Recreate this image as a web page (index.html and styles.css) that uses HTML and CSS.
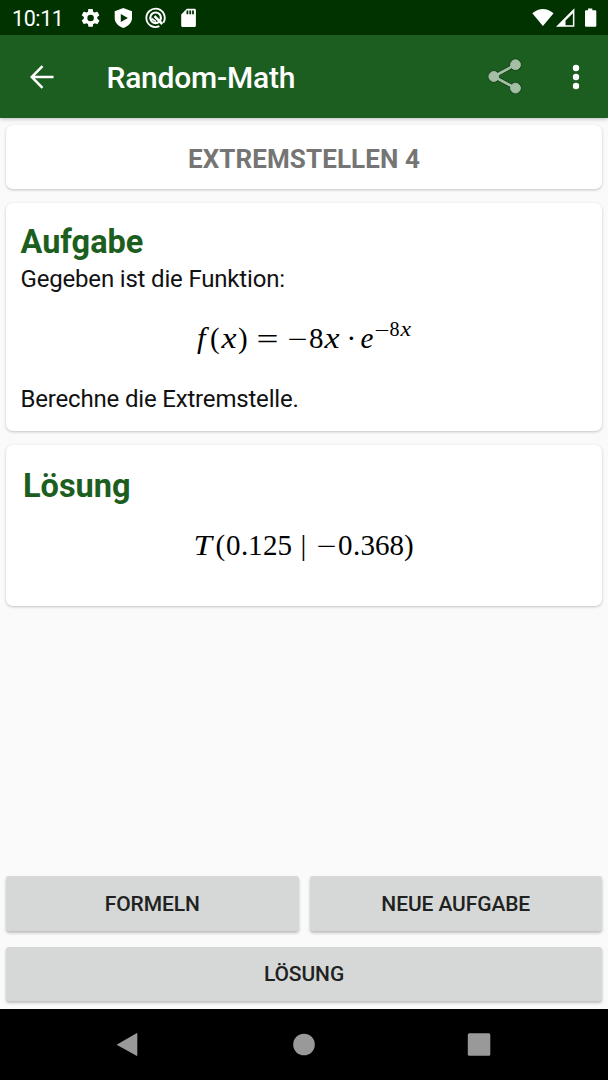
FILE: index.html
```html
<!DOCTYPE html>
<html lang="de">
<head>
    <meta charset="UTF-8">
    <meta name="viewport" content="width=device-width, initial-scale=1.0">
    <title>Random-Math</title>
    <link rel="stylesheet" href="styles.css">
</head>
<body>
    <div class="status-bar">
        <span class="clock">10:11</span>
        <svg class="status-icons" width="120" height="24" viewBox="0 0 120 24" fill="#fff">
            <!-- settings -->
            <g transform="translate(-.2 1.1) scale(.9)">
                <path fill-rule="evenodd" d="M19.400 13c0-.3.1-.6.1-1s0-.7-.1-1l2.100-1.600c.2-.2.3-.5.1-.7l-2-3.400c-.1-.2-.4-.3-.6-.2l-2.500 1c-.5-.4-1.100-.7-1.700-1l-.4-2.600c0-.3-.2-.4-.5-.4h-4c-.2 0-.4.200-.5.400L9.100 5.100c-.6.200-1.200.600-1.700 1l-2.500-1c-.2-.1-.5 0-.6.200l-2 3.400c-.1.200-.1.500.1.700l2.100 1.600c0 .3-.1.600-.1 1s0 .7.1 1l-2.100 1.600c-.2.200-.2.500-.1.700l2 3.400c.1.200.4.300.6.200l2.500-1c.5.400 1.100.800 1.700 1l.4 2.600c0 .3.200.400.500.400h4c.3 0 .5-.2.5-.4l.4-2.600c.6-.3 1.200-.6 1.700-1l2.500 1c.2.1.5 0 .6-.2l2-3.400c.1-.2.1-.5-.1-.7zM12 15.600a3.600 3.600 0 1 1 0-7.200 3.600 3.600 0 0 1 0 7.200z"/>
            </g>
            <!-- play protect -->
            <path fill-rule="evenodd" d="M43.300 2L52 5.300v6.700c0 4.700-3.500 7.900-8.700 10-5.200-2.100-8.600-5.300-8.600-10V5.300zM40.800 7.900v8l7.100-4z"/>
            <!-- circled q -->
            <g fill="none" stroke="#fff">
                <path stroke-width="1.9" d="M79.400 20.200A9.200 9.200 0 1 1 83.300 16.800"/>
                <circle cx="75.600" cy="11.800" r="5.300" stroke-width="2.200"/>
                <path stroke-width="2.600" d="M74.500 10.200l7.800 7.800"/>
                <path stroke-width="1.600" d="M71.500 12.500l4.500 3.200"/>
            </g>
            <!-- sd card -->
            <path fill-rule="evenodd" d="M114.500 2.700h-7.700L101.200 8.500v11c0 .9.600 1.500 1.500 1.500h11.700c.9 0 1.500-.6 1.500-1.500V4c0-.7-.6-1.300-1.400-1.300zM106.500 4.500v3.800h1.800V4.500zM109.300 4.500v3.800h1.800V4.500zM112.100 4.500v3.800h1.800V4.500z"/>
        </svg>
        <svg class="system-icons" width="68" height="24" viewBox="0 0 68 24" fill="#fff">
            <path d="M.3 7.300Q10.900-1.500 21.600 7.300L10.900 20z"/>
            <path fill-rule="evenodd" d="M24 20.800L42.400 2.300v18.500zM33.500 19.300h7.400V7.200l-7.400 7.400z"/>
            <path d="M56 2.400h4.300v1.800h2.700c.8 0 1.300.5 1.300 1.300v14c0 .8-.5 1.300-1.300 1.300h-8.700c-.8 0-1.300-.5-1.300-1.300v-14c0-.8.500-1.300 1.300-1.300H56z"/>
        </svg>
    </div>

    <header class="app-bar">
        <svg class="back" width="24" height="24" viewBox="0 0 24 24" fill="none" stroke="#fff" stroke-width="2.500">
            <path d="M23.500 12H2M12.500 1.200L1.700 12l10.800 10.800"/>
        </svg>
        <h1>Random-Math</h1>
        <svg class="share" width="36" height="38" viewBox="0 0 36 38">
            <g stroke="#174719" fill="#174719">
                <path d="M6.800 19.500L28.500 7.700M6.800 19.500l21.700 11.600" stroke-width="4.500"/>
                <circle cx="6.800" cy="19.500" r="5.700"/>
                <circle cx="28.500" cy="7.700" r="5.700"/>
                <circle cx="28.500" cy="31.100" r="5.700"/>
            </g>
            <g stroke="#a5bea6" fill="#a5bea6">
                <path d="M6.800 19.500L28.500 7.700M6.800 19.500l21.700 11.600" stroke-width="2.600"/>
                <circle cx="6.800" cy="19.500" r="4.900"/>
                <circle cx="28.500" cy="7.700" r="4.900"/>
                <circle cx="28.500" cy="31.100" r="4.900"/>
            </g>
        </svg>
        <svg class="more" width="8" height="26" viewBox="0 0 8 26" fill="#fff">
            <circle cx="4" cy="4" r="3.200"/>
            <circle cx="4" cy="13" r="3.200"/>
            <circle cx="4" cy="22" r="3.200"/>
        </svg>
    </header>

    <main class="content">
        <div class="card title-card">EXTREMSTELLEN 4</div>

        <section class="card task-card">
            <h2>Aufgabe</h2>
            <p>Gegeben ist die Funktion:</p>
            <svg class="formula" width="224" height="50" viewBox="0 0 224 50">
                <text class="var" y="34" x="5" textLength="8.500" lengthAdjust="spacingAndGlyphs">f</text>
                <text y="34"><tspan x="18">(</tspan><tspan x="46">)</tspan></text>
                <text class="var" y="34" x="29.500" textLength="15" lengthAdjust="spacingAndGlyphs">x</text>
                <text y="35" x="64.500" textLength="22" lengthAdjust="spacingAndGlyphs">=</text>
                <text y="35" x="95.500" textLength="20" lengthAdjust="spacingAndGlyphs">−</text>
                <text y="34" x="117">8</text>
                <text class="var" y="34" x="132.500" textLength="15" lengthAdjust="spacingAndGlyphs">x</text>
                <text y="34" x="154.500">·</text>
                <text class="var" y="34" x="168.500">e</text>
                <text class="sup" y="23" x="182.500" textLength="15" lengthAdjust="spacingAndGlyphs">−</text>
                <text class="sup" y="22" x="197.500">8</text>
                <text class="sup var" y="22" x="208.500" textLength="10.500" lengthAdjust="spacingAndGlyphs">x</text>
            </svg>
            <p>Berechne die Extremstelle.</p>
        </section>

        <section class="card solution-card">
            <h2>Lösung</h2>
            <svg class="formula" width="224" height="50" viewBox="0 0 224 50">
                <text class="var" y="34" x="1.500" textLength="18.500" lengthAdjust="spacingAndGlyphs">T</text>
                <text y="34"><tspan x="23.500">(</tspan><tspan x="34">0</tspan><tspan x="49">.</tspan><tspan x="56">1</tspan><tspan x="71">2</tspan><tspan x="85.500">5</tspan></text>
                <text y="34" x="108.500">|</text>
                <text y="35" x="124.500" textLength="20" lengthAdjust="spacingAndGlyphs">−</text>
                <text y="34"><tspan x="146">0</tspan><tspan x="161">.</tspan><tspan x="168.500">3</tspan><tspan x="183">6</tspan><tspan x="197.500">8</tspan><tspan x="212">)</tspan></text>
            </svg>
        </section>

        <div class="buttons">
            <button>FORMELN</button>
            <button>NEUE AUFGABE</button>
            <button class="full">LÖSUNG</button>
        </div>
    </main>

    <nav class="nav-bar">
        <svg width="24" height="26" viewBox="0 0 24 26"><path d="M0 12.500L19.500 1.200q.8-.3.800.5v21.600q0 .8-.8.500L0 12.900z"/></svg>
        <svg width="24" height="26" viewBox="0 0 24 26"><circle cx="12" cy="12.500" r="10.800"/></svg>
        <svg width="24" height="26" viewBox="0 0 24 26"><rect x=".8" y="1.300" width="22.500" height="22.500" rx="1.500"/></svg>
    </nav>
</body>
</html>
```
FILE: styles.css
```css
* {
    box-sizing: border-box;
}

body {
    margin: 0;
    height: 1080px;
    display: flex;
    flex-direction: column;
    font-family: Roboto, sans-serif;
    background-color: #fafafa;
    overflow: hidden;
}

svg {
    display: block;
    flex: none;
}

/* Status bar */
.status-bar {
    height: 35px;
    flex: none;
    padding: 1px 8px 0 12px;
    display: flex;
    align-items: center;
    background-color: #003300;
    color: #ffffff;
}

.clock {
    width: 68px;
    padding-top: 1px;
    font-size: 21.5px;
    letter-spacing: -0.4px;
}

.system-icons {
    margin-left: auto;
}

/* App bar */
.app-bar {
    height: 83px;
    flex: none;
    padding: 0 28.5px 0 29.5px;
    display: flex;
    align-items: center;
    background-color: #1b5e20;
    color: #ffffff;
    box-shadow: 0 1px 4px rgba(0, 0, 0, 0.25);
}

.app-bar h1 {
    margin: 2px 0 0 53px;
    font-size: 30px;
    font-weight: 500;
    letter-spacing: -0.22px;
}

.share {
    margin: 0 0 1px auto;
}

.more {
    margin-left: 48.5px;
}

/* Cards */
.content {
    flex: 1;
    padding: 7px 6px 8px;
    display: flex;
    flex-direction: column;
    gap: 14px;
}

.card {
    background-color: #ffffff;
    border-radius: 7px;
    box-shadow: 0 1px 3px rgba(0, 0, 0, 0.22);
}

.title-card {
    height: 64px;
    padding-top: 3px;
    display: flex;
    align-items: center;
    justify-content: center;
    font-size: 26px;
    letter-spacing: 0.1px;
    font-weight: 700;
    color: #757575;
}

.card h2 {
    margin: 0;
    font-size: 32.5px;
    line-height: 38px;
    font-weight: 700;
    color: #1b5e20;
}

.card p {
    margin: 0;
    font-size: 24px;
    line-height: 32px;
    letter-spacing: -0.18px;
    color: #111111;
}

.task-card {
    height: 228px;
    padding: 20px 14.5px 0;
}

.task-card p {
    padding-top: 2px;
}

.task-card .formula {
    margin: 19px auto 17px;
}

.solution-card {
    height: 161px;
    padding: 22px 17px;
}

.solution-card .formula {
    margin: 16px auto 0;
}

.formula {
    font-family: "Liberation Serif", serif;
    font-size: 29px;
    overflow: visible;
}

.formula .var {
    font-style: italic;
}

.formula .sup {
    font-size: 20px;
}

/* Buttons */
.buttons {
    margin-top: auto;
    display: grid;
    grid-template-columns: 1fr 1fr;
    gap: 16px 11px;
}

.buttons button {
    height: 54.5px;
    padding: 1px 0 0;
    border: none;
    border-radius: 3px;
    background-color: #d6d8d7;
    box-shadow: 0 2px 3px rgba(0, 0, 0, 0.25);
    font-family: inherit;
    font-size: 21px;
    font-weight: 500;
    letter-spacing: -0.1px;
    color: #202121;
}

.buttons .full {
    grid-column: 1 / 3;
}

/* Navigation bar */
.nav-bar {
    height: 71px;
    flex: none;
    display: flex;
    align-items: center;
    justify-content: center;
    gap: 151px;
    background-color: #000000;
    fill: #999999;
}
```
